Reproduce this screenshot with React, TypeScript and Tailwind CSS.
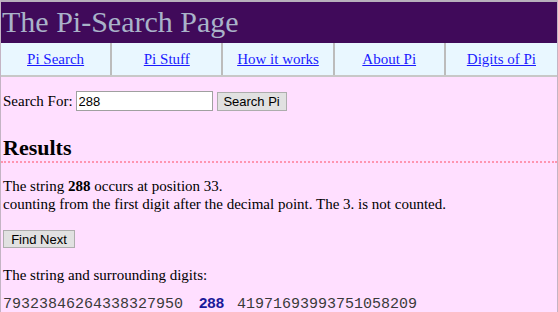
export default function App() {
  const links = ["Pi Search", "Pi Stuff", "How it works", "About Pi", "Digits of Pi"];
  return (
    <div className="min-h-screen bg-[#ffdfff] border-x border-[#c4b4c4] font-['Liberation_Serif',serif] text-[15px] text-black">
      <div className="h-[43px] bg-[#400a5a] border-t-2 border-[#b8b0bc] pl-[1px]">
        <h1 className="text-[30px] leading-[40px] text-[#a9b3c9]">The Pi-Search Page</h1>
      </div>
      <nav className="grid grid-cols-5 bg-[#e9f7ff] border-b-2 border-[#c8c8c8]">
        {links.map((l, i) => (
          <div
            key={l}
            className={`h-[32px] flex items-center justify-center ${i < 4 ? "border-r-2 border-[#bcbcbc]" : ""}`}
          >
            <a href="#" className="text-[#1a1aff] underline text-[15px]">
              {l}
            </a>
          </div>
        ))}
      </nav>
      <div className="px-[2px]">
        <div className="mt-[14px] flex items-center h-[20px]">
          <span>Search For:</span>
          <input
            defaultValue="288"
            className="ml-[3px] w-[137px] h-[20px] bg-white border border-[#a0a0a0] px-[2px] text-[13px] font-['Liberation_Sans',sans-serif] outline-none"
          />
          <button className="ml-[4px] w-[70px] h-[19px] bg-[#e1e1e1] border border-[#adadad] text-[13px] font-['Liberation_Sans',sans-serif] leading-none">
            Search Pi
          </button>
        </div>
        <h2 className="mt-[24px] text-[22px] font-bold leading-[26px]">Results</h2>
      </div>
      <div className="border-b-2 border-dotted border-[#ff94b0]" />
      <div className="px-[2px]">
        <p className="mt-[14px] leading-[18px]">
          The string <b>288</b> occurs at position 33.
          <br />
          counting from the first digit after the decimal point. The 3. is not counted.
        </p>
        <button className="mt-[17px] w-[72px] h-[18px] bg-[#e1e1e1] border border-[#adadad] text-[13px] font-['Liberation_Sans',sans-serif] leading-none">
          Find Next
        </button>
        <p className="mt-[16px] leading-[18px]">The string and surrounding digits:</p>
        <p className="mt-[11px] font-['Liberation_Mono',monospace] text-[15px] text-[#3a3a3a] leading-[16px] whitespace-pre">
          79323846264338327950
          <b className="ml-[16px] mr-[13px] text-[#1a1a9a] font-['Liberation_Sans',sans-serif]">288</b>
          41971693993751058209
        </p>
      </div>
    </div>
  );
}
